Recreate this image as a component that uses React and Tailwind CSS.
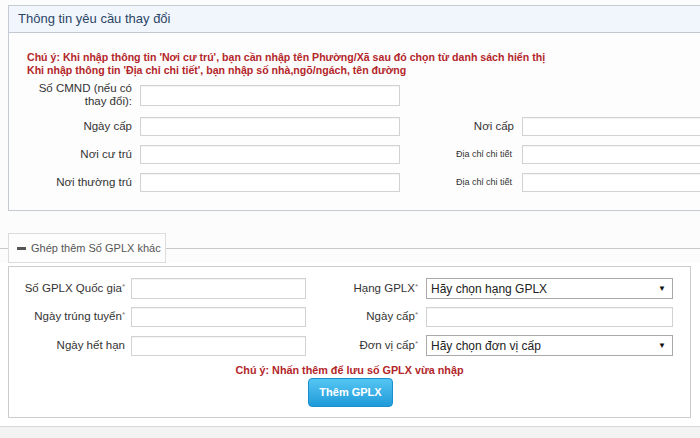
import React from 'react';

const font = { fontFamily: '"Liberation Sans", Arial, sans-serif' };

function Input({ className = '' }) {
  return <div className={`bg-white border border-[#d2d2d2] shadow-[inset_0_1px_1px_rgba(0,0,0,0.05)] ${className}`} />;
}

function Select({ text }) {
  return (
    <div className="w-[247px] h-[21px] bg-white border border-[#a9a9a9] flex items-center justify-between pl-[4px] pr-[6px]">
      <span className="text-[12px] text-[#222]">{text}</span>
      <span className="text-[8px] text-[#111]">▼</span>
    </div>
  );
}

function Star() {
  return <sup className="text-[8px] text-[#777] top-[-3px]">*</sup>;
}

export default function App() {
  return (
    <div className="w-[700px] h-[438px] overflow-hidden bg-[#fcfcfc] text-[11.5px] text-[#333]" style={font}>
      {/* Thông tin yêu cầu thay đổi */}
      <div className="ml-[8px] mt-[5px] w-[720px] border border-[#c6cad2] bg-[#fdfdfd]">
        <div className="h-[27px] bg-[#f1f5fc] border-b border-[#c3c8d2] pl-[9px] text-[13px] leading-[26px] text-[#2b4666]">
          Thông tin yêu cầu thay đổi
        </div>
        <div className="pt-[18px] pb-[18px]">
          <div className="pl-[18px] text-[10.6px] leading-[13px] font-bold text-[#b3262a]">
            <p>Chú ý: Khi nhập thông tin 'Nơi cư trú', bạn cần nhập tên Phường/Xã sau đó chọn từ danh sách hiển thị</p>
            <p>Khi nhập thông tin 'Địa chỉ chi tiết', bạn nhập số nhà,ngõ/ngách, tên đường</p>
          </div>

          <div className="mt-[5px] flex items-center">
            <div className="w-[123px] text-right leading-[13px]">Số CMND (nếu có<br />thay đổi):</div>
            <Input className="ml-[8px] w-[260px] h-[21px]" />
          </div>

          <div className="mt-[9px] flex items-center">
            <div className="w-[123px] text-right">Ngày cấp</div>
            <Input className="ml-[8px] w-[260px] h-[19px]" />
            <div className="w-[114px] text-right">Nơi cấp</div>
            <Input className="ml-[8px] w-[200px] h-[19px]" />
          </div>

          <div className="mt-[9px] flex items-center">
            <div className="w-[123px] text-right">Nơi cư trú</div>
            <Input className="ml-[8px] w-[260px] h-[19px]" />
            <div className="w-[112px] text-right text-[9px]">Địa chỉ chi tiết</div>
            <Input className="ml-[10px] w-[200px] h-[19px]" />
          </div>

          <div className="mt-[9px] flex items-center">
            <div className="w-[123px] text-right">Nơi thường trú</div>
            <Input className="ml-[8px] w-[260px] h-[19px]" />
            <div className="w-[112px] text-right text-[9px]">Địa chỉ chi tiết</div>
            <Input className="ml-[10px] w-[200px] h-[19px]" />
          </div>
        </div>
      </div>

      {/* Ghép thêm Số GPLX khác */}
      <div className="mt-[22px] flex items-center h-[30px]">
        <div className="w-[8px] h-px bg-[#c8c8c8]" />
        <div className="h-[30px] w-[158px] border border-[#dcdcdc] bg-[#fdfdfd] flex items-center pl-[8px] gap-[5px] text-[11px] text-[#555] whitespace-nowrap">
          <div className="w-[9px] h-[3px] bg-[#555]" />
          <span>Ghép thêm Số GPLX khác</span>
        </div>
        <div className="flex-1 h-px bg-[#c8c8c8]" />
      </div>

      <div className="bg-white pt-[3px]">
        <div className="ml-[8px] w-[683px] h-[152px] border border-[#cccccc] bg-white pt-[11px]">
          <div className="flex items-center">
            <div className="w-[116px] text-right">Số GPLX Quốc gia<Star /></div>
            <Input className="ml-[6px] w-[175px] h-[21px]" />
            <div className="w-[112px] text-right">Hạng GPLX<Star /></div>
            <div className="ml-[8px]"><Select text="Hãy chọn hạng GPLX" /></div>
          </div>

          <div className="mt-[8px] flex items-center">
            <div className="w-[116px] text-right">Ngày trúng tuyển<Star /></div>
            <Input className="ml-[6px] w-[175px] h-[20px]" />
            <div className="w-[112px] text-right">Ngày cấp<Star /></div>
            <Input className="ml-[8px] w-[247px] h-[20px]" />
          </div>

          <div className="mt-[8px] flex items-center">
            <div className="w-[116px] text-right">Ngày hết hạn</div>
            <Input className="ml-[6px] w-[175px] h-[20px]" />
            <div className="w-[112px] text-right">Đơn vị cấp<Star /></div>
            <div className="ml-[8px]"><Select text="Hãy chọn đơn vị cấp" /></div>
          </div>

          <div className="mt-[7px] text-center font-bold text-[10.8px] text-[#b3262a] leading-[14px]">
            Chú ý: Nhấn thêm để lưu số GPLX vừa nhập
          </div>
          <div className="flex justify-center mt-[1px]">
            <button className="w-[85px] h-[29px] ml-[2px] rounded-[4px] bg-gradient-to-b from-[#54c6f3] to-[#1d9ad9] border border-[#1a8fcf] text-white font-bold text-[11px]">
              Thêm GPLX
            </button>
          </div>
        </div>
        <div className="h-[8px] bg-white" />
      </div>
      <div className="h-px bg-[#d6d6d6]" />
      <div className="h-[20px] bg-[#f3f3f3]" />
    </div>
  );
}
